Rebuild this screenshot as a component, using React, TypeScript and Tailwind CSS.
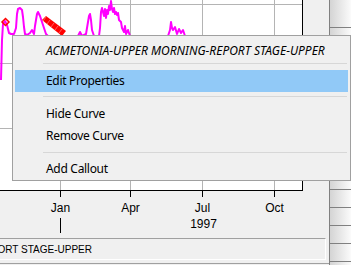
import React from "react";

const curve: [number, number][] = [
  [1, 80], [2, 40], [3, 24], [5, 21], [7, 25], [9, 33], [11, 34], [14, 34], [16, 28], [17, 14], [18, 9], [20, 8], [22, 10], [23, 17], [24, 27], [25, 34],
  [27, 35], [30, 33], [32, 30], [34, 34], [35, 26], [37, 14], [38, 12], [40, 16], [42, 22], [44, 28], [46, 34], [50, 38], [60, 38], [70, 37],
  [78, 36], [80, 32], [82, 36], [86, 34], [88, 22], [89, 16], [90, 14], [91, 20], [92, 30], [94, 36], [99, 36], [100, 28], [101, 12], [102, 8],
  [104, 16], [105, 9], [106, 18], [107, 10], [108, 14], [109, 6], [110, 10], [111, 1], [112, 9], [113, 12], [114, 8], [115, 14], [116, 12],
  [117, 15], [118, 13], [119, 20], [121, 22], [122, 28], [124, 32], [125, 26], [126, 34], [128, 30], [130, 36], [140, 38], [160, 38],
  [168, 36], [170, 30], [171, 22], [172, 28], [173, 30], [175, 27], [177, 34], [179, 29], [181, 33], [183, 30], [185, 36], [200, 38],
];

const menuFont = "font-['Noto_Sans','Liberation_Sans',sans-serif]";

function MenuItem({ label, active, italic }: { label: string; active?: boolean; italic?: boolean }) {
  return (
    <div
      className={`mx-[2px] h-[22px] flex items-center pl-[31px] text-[12px] text-black whitespace-nowrap ${
        active ? "bg-[#91c9f7]" : ""
      } ${italic ? "italic" : "tracking-[-0.3px]"}`}
    >
      {label}
    </div>
  );
}

function Sep({ before, after }: { before: number; after: number }) {
  return (
    <div style={{ paddingTop: before, paddingBottom: after }} className="ml-[30px] mr-[3px]">
      <div className="h-px bg-[#d7d7d7]" />
    </div>
  );
}

export default function App() {
  const ticks = [60, 130, 202, 274];
  const labels = ["Jan", "Apr", "Jul", "Oct"];
  return (
    <div className="relative w-[351px] h-[265px] overflow-hidden bg-[#f0f0f0] flex font-['Liberation_Sans',Arial,sans-serif]">
      <div className="w-[329px] h-full flex flex-col">
        <div className="h-[191px] flex">
          <div className="w-[303px] h-[191px] bg-white border-r border-b border-black">
            <svg width="302" height="190" className="block">
              <g stroke="#b4b4b4" strokeWidth="1" shapeRendering="crispEdges">
                <line x1="0" y1="4.5" x2="302" y2="4.5" />
                <line x1="0" y1="63.5" x2="302" y2="63.5" />
                <line x1="0" y1="128.5" x2="302" y2="128.5" />
                {ticks.map((t) => (
                  <line key={t} x1={t + 0.5} y1="0" x2={t + 0.5} y2="190" />
                ))}
              </g>
              <polyline
                points={curve.map((p) => p.join(",")).join(" ")}
                fill="none"
                stroke="#ff00ff"
                strokeWidth="2"
                strokeLinejoin="round"
              />
              <polygon points="42,20 46,16 66,31 62,36" fill="#ff0000" />
              <g stroke="#ffffff" strokeWidth="0.6" opacity="0.6">
                <line x1="46" y1="17" x2="43" y2="21" />
                <line x1="50" y1="20" x2="47" y2="24" />
                <line x1="54" y1="23" x2="51" y2="27" />
                <line x1="58" y1="26" x2="55" y2="30" />
                <line x1="62" y1="29" x2="59" y2="33" />
              </g>
              <polygon points="5.5,18.5 9,22 5.5,25.5 2,22" fill="none" stroke="#ff0000" strokeWidth="1.5" />
            </svg>
          </div>
        </div>
        <svg width="329" height="47" className="block">
          <g stroke="#000" strokeWidth="1" shapeRendering="crispEdges">
            {ticks.map((t) => (
              <line key={t} x1={t + 0.5} y1="0" x2={t + 0.5} y2="6" />
            ))}
            <line x1="60.5" y1="27" x2="60.5" y2="42" />
          </g>
          <g fontFamily="'Liberation Sans', Arial, sans-serif" fontSize="12" fill="#000" textAnchor="middle">
            {labels.map((l, i) => (
              <text key={l} x={ticks[i] + 0.5} y="20.5">
                {l}
              </text>
            ))}
            <text x="203.5" y="37">
              1997
            </text>
          </g>
        </svg>
        <div className="h-[22px] w-[326px] border-t border-t-[#a0a0a0] border-r border-b border-white flex items-center">
          <div className="w-[92px] flex justify-end whitespace-nowrap text-[10px] text-black pt-px">
            ACMETONIA-UPPER MORNING-REPORT STAGE-UPPER
          </div>
        </div>
        <div className="h-[3px]" />
        <div className="h-px bg-[#a0a0a0]" />
        <div className="h-px" />
      </div>
      <div className="w-[22px] h-full border-l border-[#808080] bg-linear-to-r from-[#d4d4d4] to-[#fbfbfb] flex flex-col">
        <div className="h-[28px] border-b border-[#808080] shrink-0" />
        {Array.from({ length: 13 }).map((_, i) => (
          <div key={i} className="h-[18px] border-b border-[#808080] shrink-0" />
        ))}
      </div>

      <div className={`absolute left-[12px] top-[35px] w-[339px] h-[146px] border border-[#a0a0a0] bg-[#f0f0f0] pt-[4px] ${menuFont}`}>
        <MenuItem label="ACMETONIA-UPPER MORNING-REPORT STAGE-UPPER" italic />
        <Sep before={1} after={6} />
        <MenuItem label="Edit Properties" active />
        <Sep before={4} after={6} />
        <MenuItem label="Hide Curve" />
        <MenuItem label="Remove Curve" />
        <Sep before={5} after={5} />
        <MenuItem label="Add Callout" />
      </div>
    </div>
  );
}
